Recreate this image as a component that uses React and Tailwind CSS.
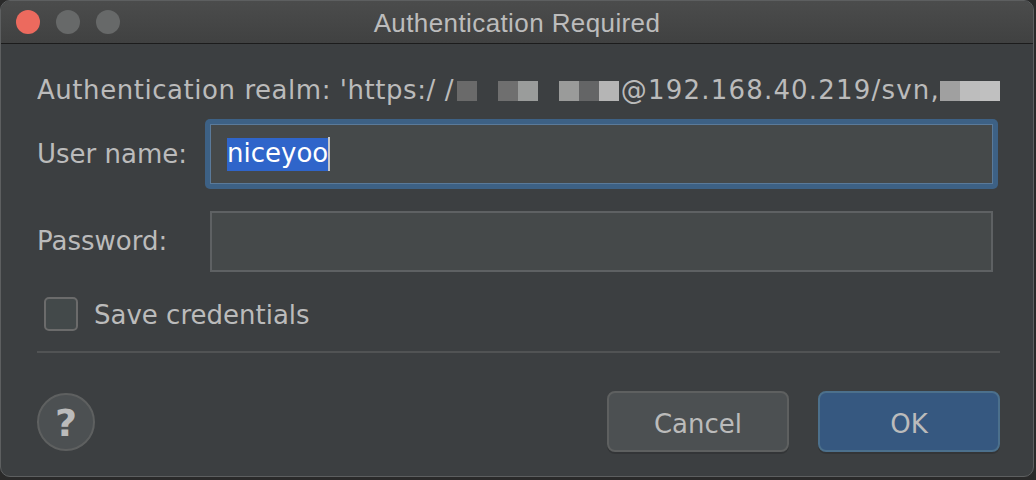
import React from 'react';

const font = { fontFamily: '"DejaVu Sans", Verdana, sans-serif' };

const Blocks = ({ items }) => (
  <span className="inline-flex items-center h-[20px] translate-y-[1px]">
    {items.map((c, i) =>
      c === null ? (
        <span key={i} className="w-[21px] h-[20px]" />
      ) : (
        <span key={i} className="w-[20px] h-[20px]" style={{ backgroundColor: c }} />
      )
    )}
  </span>
);

const App = () => {
  return (
    <div className="w-[1036px] h-[480px] bg-[#2a2a2a] overflow-hidden" style={font}>
      <div className="w-[1034px] h-[477px] rounded-[10px] border border-[#5d5f60] bg-[#3c3f41] overflow-hidden flex flex-col">
        {/* Title bar */}
        <div className="relative h-[43px] shrink-0 bg-gradient-to-b from-[#4b4c4c] to-[#404141] border-b border-[#1c1c1c] flex items-center justify-center">
          <div className="absolute left-[15px] top-[9px] flex gap-[16px]">
            <span className="w-[24px] h-[24px] rounded-full bg-[#ec6a5e]" />
            <span className="w-[24px] h-[24px] rounded-full bg-[#676969]" />
            <span className="w-[24px] h-[24px] rounded-full bg-[#676969]" />
          </div>
          <span
            className="text-[26px] text-[#bcbcbc] tracking-[0.4px] leading-none pt-[2px]"
            style={{ fontFamily: '"Liberation Sans", Arial, sans-serif' }}
          >
            Authentication Required
          </span>
        </div>

        {/* Content */}
        <div className="flex-1 flex flex-col pl-[36px] pr-[33px] text-[26px] text-[#bbbbbb]">
          <div className="mt-[31px] h-[30px] flex items-center whitespace-nowrap overflow-hidden leading-none">
            <span className="tracking-[0.55px]">Authentication realm: 'https:/ /</span>
            <span className="w-[6px]" />
            <Blocks items={['#6a6a6a', null, '#6f6f6f', '#9a9c9b', null, '#9a9b9a', '#646566', '#b5b5b5']} />
            <span className="tracking-[1.2px] ml-[2px]">@192.168.40.219/svn,</span>
            <Blocks items={['#a0a0a0', '#bdbdbd', '#c0c0c0']} />
          </div>

          {/* User name */}
          <div className="mt-[14px] flex items-center">
            <span className="w-[168px] shrink-0">User name:</span>
            <div className="flex-1 rounded-[5px] bg-[#3d6185] p-[5px] mr-[2px]">
              <div className="h-[60px] bg-[#45494a] border border-[#5a7a9a] flex items-center pl-[16px]">
                <span className="bg-[#2f65ca] text-white h-[33px] flex items-center pb-[2px] leading-none">niceyoo</span>
                <span className="w-[2px] h-[34px] bg-[#c8c8c8]" />
              </div>
            </div>
          </div>

          {/* Password */}
          <div className="mt-[22px] flex items-center">
            <span className="w-[173px] shrink-0">Password:</span>
            <div className="flex-1 h-[61px] bg-[#45494a] border-2 border-[#5e6163] mr-[7px]" />
          </div>

          {/* Save credentials */}
          <div className="mt-[25px] flex items-center">
            <span className="ml-[7px] w-[34px] h-[34px] rounded-[5px] border-2 border-[#6b6b6b] bg-[#43494a]" />
            <span className="ml-[16px] leading-none pt-[2px]">Save credentials</span>
          </div>

          {/* Separator */}
          <div className="mt-[20px] h-[2px] bg-[#515354]" />

          {/* Buttons */}
          <div className="mt-[38px] flex items-center">
            <span className="w-[58px] h-[58px] rounded-full bg-[#4c5052] border-2 border-[#5e6060] flex items-center justify-center text-[38px] font-bold text-[#bbbbbb] leading-none pt-[2px]">
              ?
            </span>
            <div className="flex-1" />
            <button className="w-[182px] h-[61px] rounded-[8px] bg-[#4c5052] border-2 border-[#5e6060] shadow-[0_2px_0_rgba(0,0,0,0.15)] text-[26px] text-[#bbbbbb] leading-none pt-[4px]">
              Cancel
            </button>
            <button className="ml-[29px] w-[182px] h-[61px] rounded-[8px] bg-[#365880] border-2 border-[#4c708c] shadow-[0_2px_0_rgba(0,0,0,0.15)] text-[26px] text-[#bbbbbb] leading-none pt-[4px]">
              OK
            </button>
          </div>
        </div>
      </div>
    </div>
  );
};

export default App;
